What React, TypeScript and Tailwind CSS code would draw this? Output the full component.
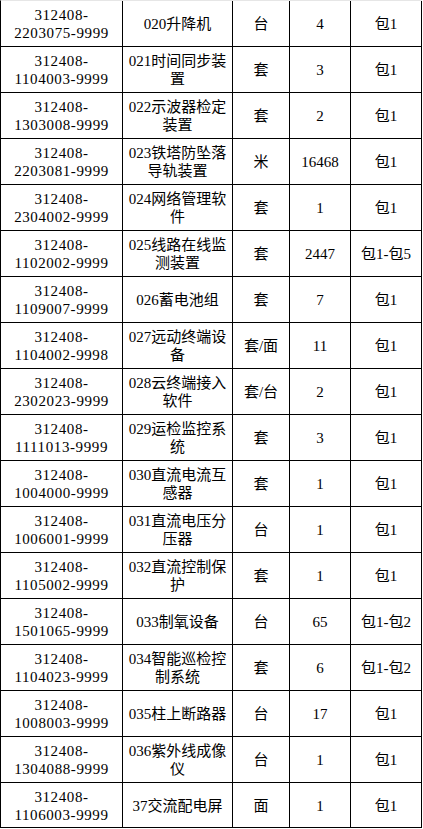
import React from "react";

type Row = { code: [string, string]; name: string[]; unit: string; qty: string; pkg: string };

const rows: Row[] = [
  { code: ["312408-", "2203075-9999"], name: ["020升降机"], unit: "台", qty: "4", pkg: "包1" },
  { code: ["312408-", "1104003-9999"], name: ["021时间同步装", "置"], unit: "套", qty: "3", pkg: "包1" },
  { code: ["312408-", "1303008-9999"], name: ["022示波器检定", "装置"], unit: "套", qty: "2", pkg: "包1" },
  { code: ["312408-", "2203081-9999"], name: ["023铁塔防坠落", "导轨装置"], unit: "米", qty: "16468", pkg: "包1" },
  { code: ["312408-", "2304002-9999"], name: ["024网络管理软", "件"], unit: "套", qty: "1", pkg: "包1" },
  { code: ["312408-", "1102002-9999"], name: ["025线路在线监", "测装置"], unit: "套", qty: "2447", pkg: "包1-包5" },
  { code: ["312408-", "1109007-9999"], name: ["026蓄电池组"], unit: "套", qty: "7", pkg: "包1" },
  { code: ["312408-", "1104002-9998"], name: ["027远动终端设", "备"], unit: "套/面", qty: "11", pkg: "包1" },
  { code: ["312408-", "2302023-9999"], name: ["028云终端接入", "软件"], unit: "套/台", qty: "2", pkg: "包1" },
  { code: ["312408-", "1111013-9999"], name: ["029运检监控系", "统"], unit: "套", qty: "3", pkg: "包1" },
  { code: ["312408-", "1004000-9999"], name: ["030直流电流互", "感器"], unit: "套", qty: "1", pkg: "包1" },
  { code: ["312408-", "1006001-9999"], name: ["031直流电压分", "压器"], unit: "台", qty: "1", pkg: "包1" },
  { code: ["312408-", "1105002-9999"], name: ["032直流控制保", "护"], unit: "套", qty: "1", pkg: "包1" },
  { code: ["312408-", "1501065-9999"], name: ["033制氧设备"], unit: "台", qty: "65", pkg: "包1-包2" },
  { code: ["312408-", "1104023-9999"], name: ["034智能巡检控", "制系统"], unit: "套", qty: "6", pkg: "包1-包2" },
  { code: ["312408-", "1008003-9999"], name: ["035柱上断路器"], unit: "台", qty: "17", pkg: "包1" },
  { code: ["312408-", "1304088-9999"], name: ["036紫外线成像", "仪"], unit: "台", qty: "1", pkg: "包1" },
  { code: ["312408-", "1106003-9999"], name: ["37交流配电屏"], unit: "面", qty: "1", pkg: "包1" },
];

const cell =
  "flex flex-col items-center justify-center text-center border-r border-black whitespace-nowrap";

export default function App() {
  return (
    <div
      className="w-[423px] h-[829px] overflow-hidden bg-white text-black text-[15px] leading-[18px]"
      style={{ fontFamily: '"Liberation Serif", "Noto Sans CJK SC", serif' }}
    >
      <div className="w-[422px] border-t border-t-[#e6e6e6] border-l border-black">
        {rows.map((r, i) => (
          <div
            key={i}
            className={`grid grid-cols-[122px_110px_57px_61px_71px] border-b border-black ${
              i === rows.length - 1 ? "h-[45px]" : "h-[46px]"
            }`}
          >
            <div className={`${cell} tracking-[0.6px] pt-px`}>
              <span>{r.code[0]}</span>
              <span>{r.code[1]}</span>
            </div>
            <div className={`${cell} pt-px`}>
              {r.name.map((n, j) => (
                <span key={j}>{n}</span>
              ))}
            </div>
            <div className={`${cell} pt-px`}>{r.unit}</div>
            <div className={`${cell} pt-px`}>{r.qty}</div>
            <div className={`${cell} pt-px`}>{r.pkg}</div>
          </div>
        ))}
      </div>
    </div>
  );
}
